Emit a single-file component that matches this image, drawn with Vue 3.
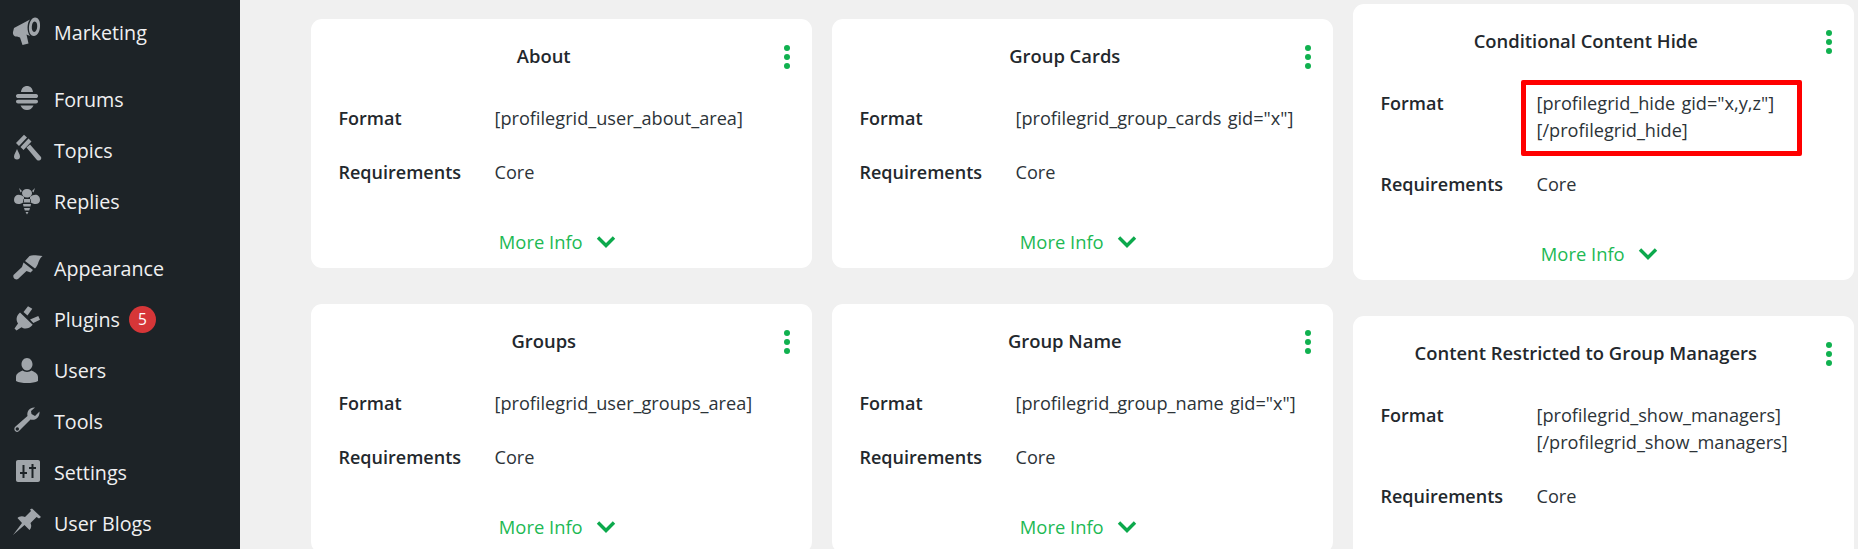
<script setup>
const menu = [
  { label: 'Marketing', d: 'M3 11 L19 2.5 C16 6 15.5 14 19 19 L15.5 17.5 L17.5 26.5 L11.5 28 L9 20.5 L6 19.5 C3.5 20 1.5 17.5 2 15 Z M24 0.5 C28 0.5 29.5 5 29 10 C28.5 15.5 26 19 23 19 C19 19 17.5 14.5 18 9.5 C18.5 4.5 21 0.5 24 0.5 Z M23.6 4.5 C22 4.5 21 7 20.8 9.8 C20.6 12.5 21.5 15 23.2 15 C25 15 26 12.5 26.2 9.8 C26.4 7 25.5 4.5 23.6 4.5 Z' },
  { label: 'Forums', gap: true, d: 'M10 9 C10.5 5 13 3 16 3 C19 3 21.5 5 22 9 Z M7 11 H25 C26.5 11 27 12 27 13 C27 14.5 26 15 25 15 H7 C6 15 5 14.5 5 13 C5 12 5.5 11 7 11 Z M7 16.8 H25 C26.5 16.8 27 17.8 27 18.6 C27 19.8 26 20.6 25 20.6 H7 C6 20.6 5 19.8 5 18.6 C5 17.8 5.5 16.8 7 16.8 Z M9.5 22.4 H22.5 C21 25.5 19 27 16 27 C13 27 11 25.5 9.5 22.4 Z' },
  { label: 'Topics', d: 'M5 9 L13 .8 L16 3.5 L8 12 Z M9.5 13 L17.5 4.5 L20.5 7.5 L12.5 16 Z M15.5 13.5 L19 10.5 L30 23 C31 25 29 27 27 26.5 C26.5 26.5 26 26 25.5 25.5 Z M6 15 C7 18 9 20 9 22.5 A3 3 0 0 1 3 22.5 C3 20 5 18 6 15 Z' },
  { label: 'Replies', d: 'M13 12 C8 8 3 10 3 15 C3 20 9 20 13 17 Z M19 12 C24 8 29 10 29 15 C29 20 23 20 19 17 Z M16 4 C19 4 21 6 21 8 C21 10.5 19 12.5 16 12.5 C13 12.5 11 10.5 11 8 C11 6 13 4 16 4 Z M8 3 L11 6 L9.5 7.5 Z M24 3 L21 6 L22.5 7.5 Z M12.5 14 H19.5 L20 17.5 H12 Z M12 19 H20 L19.5 21.5 H12.5 Z M13 23 H19 L18.2 25.5 H13.8 Z M14.5 27 H17.5 L16 29.5 Z' },
  { label: 'Appearance', gap: true, d: 'M18.5 3 C22 1.5 27 3 31.5 3 C29 5 28.5 7 27.5 9 C27 11 25.5 14 24 15.5 L14 8 Z M12.5 9.5 L22 17 L19.5 19.5 L15.5 18 L7 26 C4.5 27.5 1.5 25 2.5 22 L11 14 Z' },
  { label: 'Plugins', badge: 5, d: 'M9 8.5 L21.7 20.7 C18 25 13.5 25.5 10.5 23.2 L5.5 26.5 L3.5 24.5 L7 19.5 C4.5 15.5 5.5 11.5 9 8.5 Z M17 2.3 L21.3 4.7 L16.5 11.5 L12.5 8 Z M27.3 12 L29 15.7 L22.3 19 L19 15.5 Z' },
  { label: 'Users', d: 'M16 3 C19.2 3 21.5 6 21.5 9.2 C21.5 12.4 19.2 15.4 16 15.4 C12.8 15.4 10.5 12.4 10.5 9.2 C10.5 6 12.8 3 16 3 Z M5 22 C5 18.5 9 16.8 11.5 15.6 C13.5 17.4 18.5 17.4 20.5 15.6 C23 16.8 27 18.5 27 22 L27 26 C22 28.8 10 28.8 5 26 Z' },
  { label: 'Tools', d: 'M24 1.5 C19 1 15.5 5 16.5 10 L4.5 20.5 C1.5 23 5 28 8 25 L19.5 13.5 C24.5 15 29 11 28.5 5.5 L24 10 L20.5 8 L20 5 Z M6.3 21.3 A1.7 1.7 0 1 0 6.31 24.7 A1.7 1.7 0 1 0 6.3 21.3 Z' },
  { label: 'Settings', d: 'M7 3 H27 C28.2 3 29 3.8 29 5 V23 C29 24.2 28.2 25 27 25 H7 C5.8 25 5 24.2 5 23 V5 C5 3.8 5.8 3 7 3 Z M11.5 8 V15 H9 V17 H11.5 V21 H13.5 V17 H16 V15 H13.5 V8 Z M20.5 7 V10 H18 V12 H20.5 V21 H22.5 V12 H25 V10 H22.5 V7 Z' },
  { label: 'User Blogs', d: 'M21 .5 L30 9 L28 10.5 L25.5 9 L19.5 15 C21 18 20 20.5 18.5 22 L13.5 17 L2 27 L11 15 L6.5 10 C8 8.5 11 7.5 14 9 L20 3 L19 1.5 Z' },
]

const columns = [
  {
    name: 'first',
    cards: [
      { title: 'About', format: ['[profilegrid_user_about_area]'] },
      { title: 'Groups', format: ['[profilegrid_user_groups_area]'] },
    ],
  },
  {
    name: 'second',
    cards: [
      { title: 'Group Cards', format: ['[profilegrid_group_cards gid="x"]'] },
      { title: 'Group Name', format: ['[profilegrid_group_name gid="x"]'] },
    ],
  },
  {
    name: 'third',
    cards: [
      { title: 'Conditional Content Hide', format: ['[profilegrid_hide gid="x,y,z"]', '[/profilegrid_hide]'], marked: true },
      { title: 'Content Restricted to Group Managers', format: ['[profilegrid_show_managers]', '[/profilegrid_show_managers]'] },
    ],
  },
]
</script>

<template>
  <div class="page">
    <aside class="sidebar">
      <a
        v-for="item in menu"
        :key="item.label"
        class="menu-item"
        :class="{ 'menu-gap': item.gap }"
      >
        <svg class="menu-icon" viewBox="0 0 32 32" width="32" height="32">
          <path :d="item.d" fill-rule="evenodd" />
        </svg>
        <span>{{ item.label }}</span>
        <span v-if="item.badge" class="badge">{{ item.badge }}</span>
      </a>
    </aside>

    <main class="content">
      <div v-for="col in columns" :key="col.name" class="column" :class="col.name">
        <section v-for="card in col.cards" :key="card.title" class="card">
          <header class="card-head">
            <h3 class="card-title">{{ card.title }}</h3>
            <div class="dots"><i></i><i></i><i></i></div>
          </header>
          <div class="row">
            <div class="label">Format</div>
            <div class="value">
              <span v-for="line in card.format" :key="line" class="line">{{ line }}</span>
              <div v-if="card.marked" class="highlight"></div>
            </div>
          </div>
          <div class="row">
            <div class="label">Requirements</div>
            <div class="value">Core</div>
          </div>
          <footer class="more">
            <span>More Info</span>
            <svg viewBox="0 0 20 13" width="20" height="13">
              <polyline points="2,2.5 10,10.5 18,2.5" />
            </svg>
          </footer>
        </section>
      </div>
    </main>
  </div>
</template>

<style>
html, body { margin: 0; background: #f0f0f0; }
</style>

<style scoped>
.page {
  display: flex;
  height: 549px;
  overflow: hidden;
  background: #f0f0f0;
  font-family: "Open Sans", "Noto Sans", sans-serif;
}
.sidebar {
  width: 240px;
  flex: none;
  background: #1d2327;
  padding-top: 7px;
  box-sizing: border-box;
}
.menu-item {
  display: flex;
  align-items: center;
  height: 51px;
  padding-left: 11px;
  color: #f0f0f1;
  font-size: 19.7px;
}
.menu-gap { margin-top: 16.5px; }
.menu-item:nth-child(2) { margin-top: 15.5px; }
.menu-icon {
  width: 32px;
  height: 32px;
  margin-right: 11px;
  fill: #a0a5aa;
  flex: none;
}
.badge {
  width: 27px;
  height: 27px;
  margin-left: 9px;
  border-radius: 50%;
  background: #d63638;
  color: #fff;
  font-size: 15.5px;
  line-height: 27px;
  text-align: center;
}
.content {
  flex: 1;
  display: flex;
  gap: 20px;
  padding-left: 71px;
  align-items: flex-start;
  min-width: 0;
}
.column {
  width: 501px;
  flex: none;
  display: flex;
  flex-direction: column;
  gap: 36px;
  padding-top: 19px;
}
.column.third { padding-top: 4px; }
.card {
  background: #fff;
  border-radius: 11px;
  padding: 0 0 0 27.5px;
  color: #2c3338;
}
.card-head {
  display: flex;
  align-items: center;
  height: 72px;
  padding-right: 18px;
}
.card-title {
  flex: 1;
  margin: 0;
  font-size: 18.4px;
  font-weight: 600;
  text-align: center;
  color: #23282d;
}
.dots {
  width: 45px;
  display: flex;
  flex-direction: column;
  align-items: flex-end;
  gap: 3px;
  padding: 3px 4px 0 0;
  box-sizing: border-box;
}
.dots i {
  width: 6px;
  height: 6px;
  border-radius: 50%;
  background: #10b14f;
}
.row {
  display: flex;
  padding: 13.5px 0;
  font-size: 18px;
  line-height: 27px;
}
.label {
  width: 156px;
  flex: none;
  font-weight: 600;
  color: #23282d;
}
.value {
  position: relative;
  font-size: 18.15px;
  word-spacing: 1.5px;
  color: #2c3338;
}
.line { display: block; }
.highlight {
  position: absolute;
  left: -16px;
  top: -9.5px;
  width: 281px;
  height: 76px;
  box-sizing: border-box;
  border: 5px solid #f00;
  border-radius: 2px;
}
.more {
  display: flex;
  align-items: center;
  justify-content: center;
  gap: 13px;
  height: 69px;
  padding: 16px 36px 0 0;
  box-sizing: border-box;
  font-size: 18.4px;
  color: #1db954;
}
.more svg {
  fill: none;
  stroke: #0ca94c;
  stroke-width: 3.4px;
}
</style>
